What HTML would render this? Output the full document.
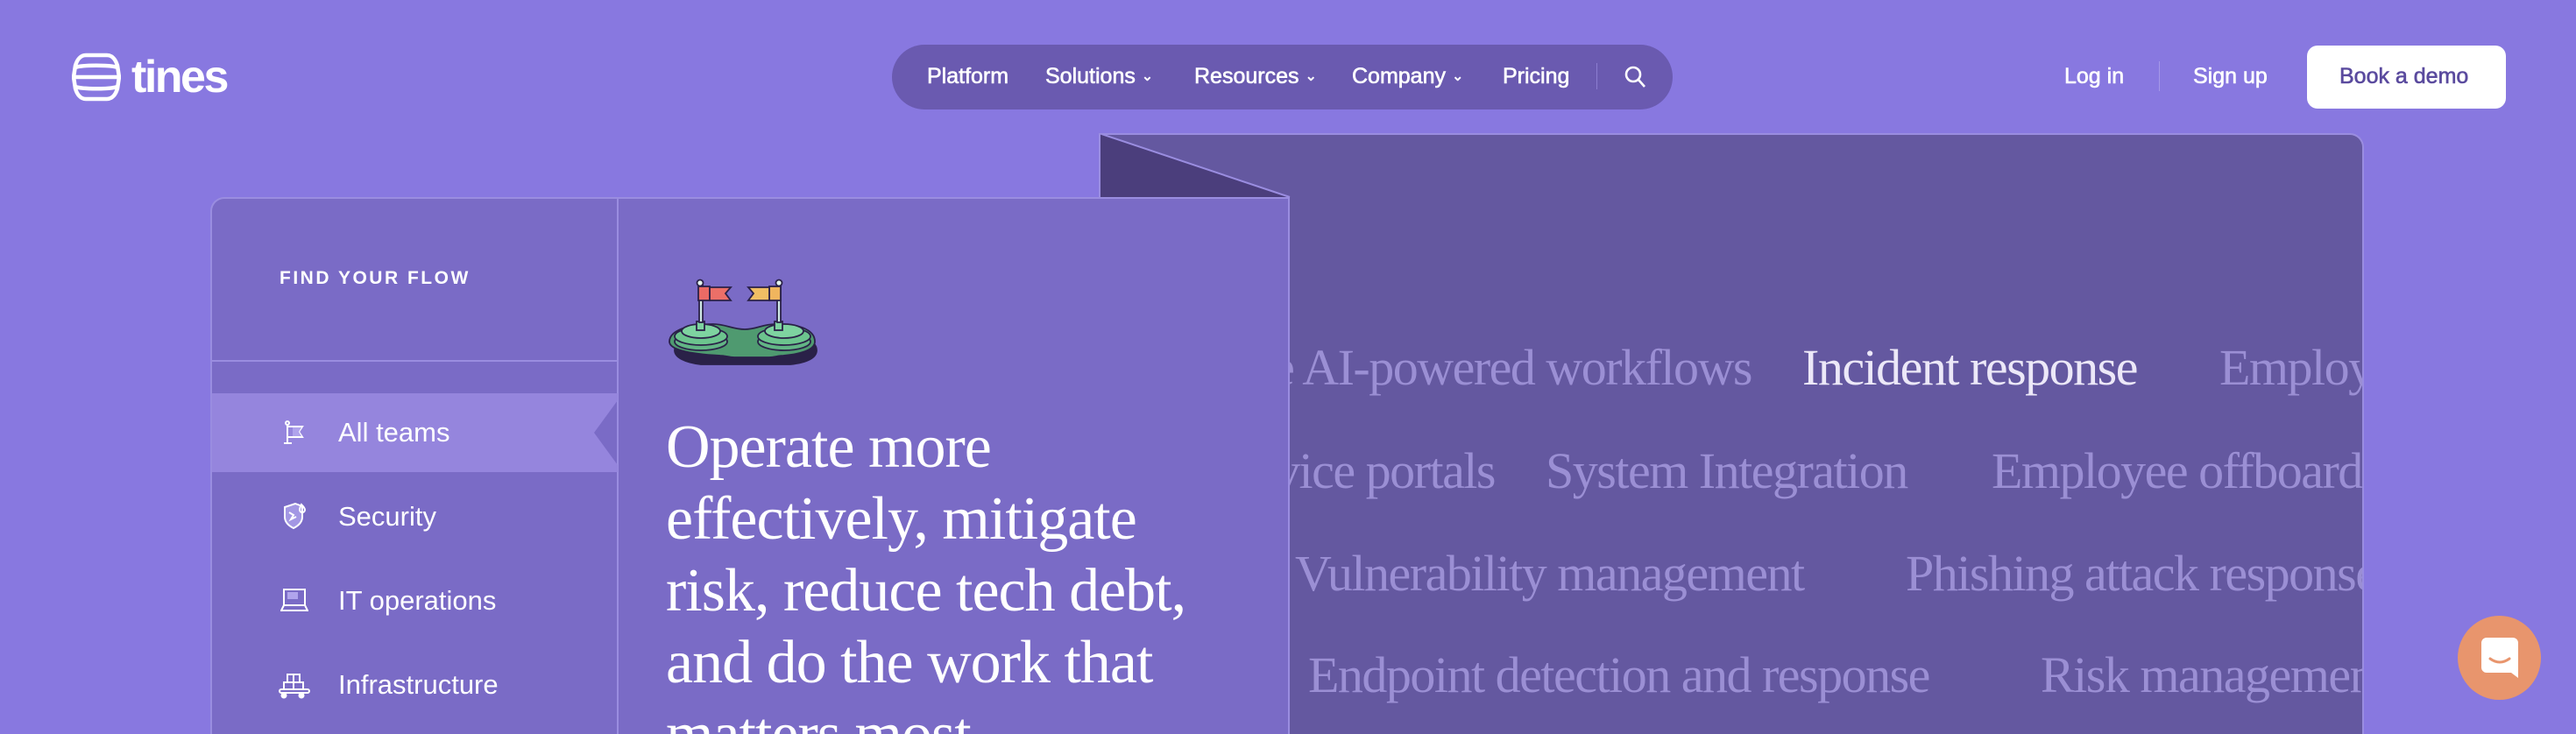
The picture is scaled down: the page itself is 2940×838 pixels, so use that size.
<!DOCTYPE html>
<html style="width:2940px;height:838px;overflow:hidden"><head><meta charset="utf-8"><style>
*{margin:0;padding:0;box-sizing:border-box}
body{width:2940px;height:838px;overflow:hidden;background:#8878e0;font-family:"Liberation Sans",sans-serif;position:relative;color:#fff}
.a{position:absolute;white-space:nowrap}
.nav{font-size:25px;font-weight:400;-webkit-text-stroke:0.6px #fff;color:#fff;top:72px;line-height:30px}
.serif{font-family:"Liberation Serif",serif}
.mq{font-size:58px;color:#9b8fd4;line-height:60px;letter-spacing:-1.5px;font-family:"Liberation Serif",serif}
.item{font-size:31px;color:#fff;left:386px;line-height:36px}
</style></head><body>
<svg class="a" style="left:82px;top:60px" width="56" height="56" viewBox="0 0 56 56" fill="none" stroke="#fff" stroke-width="4.5" stroke-linejoin="round">
<path d="M16 3h24c6 0 10 5 12 12l2 13-2 13c-2 7-6 12-12 12H16C10 53 6 48 4 41L2 28l2-13C6 8 10 3 16 3z"/>
<path d="M4 17c8-3 40-3 48 0M2 28h52M4 39c8 3 40 3 48 0"/>
</svg>
<div class="a" style="left:150px;top:58px;font-size:52px;font-weight:700;letter-spacing:-2.5px;line-height:60px">tines</div>

<div class="a" style="left:1018px;top:51px;width:891px;height:74px;border-radius:37px;background:#6a5ab0"></div>
<div class="a nav" style="left:1058px">Platform</div>
<div class="a nav" style="left:1193px">Solutions <span style="font-size:16px;vertical-align:3px">&#8964;</span></div>
<div class="a nav" style="left:1363px">Resources <span style="font-size:16px;vertical-align:3px">&#8964;</span></div>
<div class="a nav" style="left:1543px">Company <span style="font-size:16px;vertical-align:3px">&#8964;</span></div>
<div class="a nav" style="left:1715px">Pricing</div>
<div class="a" style="left:1822px;top:72px;width:1px;height:30px;background:#8c7dd0"></div>
<svg class="a" style="left:1852px;top:73px" width="30" height="30" viewBox="0 0 30 30" fill="none" stroke="#fff" stroke-width="2.6"><circle cx="12" cy="12" r="8"/><path d="M18 18l7 8"/></svg>

<div class="a nav" style="left:2356px">Log in</div>
<div class="a" style="left:2464px;top:70px;width:1px;height:34px;background:#a598e8"></div>
<div class="a nav" style="left:2503px">Sign up</div>
<div class="a" style="left:2633px;top:52px;width:227px;height:72px;border-radius:12px;background:#fff"></div>
<div class="a nav" style="left:2670px;color:#5a4a9e;-webkit-text-stroke:0.6px #5a4a9e">Book a demo</div>

<div class="a" style="left:1254px;top:152px;width:1444px;height:686px;background:#6458a0;border:2px solid #9a8de0;border-left:none;border-bottom:none;border-radius:0 16px 0 0;overflow:hidden">
  <div class="a mq" style="right:697px;top:236px">Automate AI-powered workflows</div>
  <div class="a mq" style="left:803px;top:236px;color:#ece8f8">Incident response</div>
  <div class="a mq" style="left:1279px;top:236px">Employee onboarding</div>
  <div class="a mq" style="right:990px;top:354px">Service portals</div>
  <div class="a mq" style="left:510px;top:354px">System Integration</div>
  <div class="a mq" style="left:1019px;top:354px">Employee offboarding</div>
  <div class="a mq" style="left:224px;top:471px">Vulnerability management</div>
  <div class="a mq" style="left:921px;top:471px">Phishing attack response</div>
  <div class="a mq" style="left:239px;top:587px">Endpoint detection and response</div>
  <div class="a mq" style="left:1075px;top:587px">Risk management</div>
</div>
<svg class="a" style="left:1254px;top:152px" width="220" height="75" viewBox="0 0 220 75"><polygon points="0,0 218,73 0,73" fill="#4b3e7c"/><line x1="0" y1="0" x2="218" y2="73" stroke="#9a8de0" stroke-width="2"/><line x1="1" y1="0" x2="1" y2="75" stroke="#9a8de0" stroke-width="2"/></svg>

<div class="a" style="left:240px;top:225px;width:1232px;height:613px;background:#7a6bc6;border:2px solid #9a8de0;border-bottom:none;border-radius:16px 0 0 0"></div>
<div class="a" style="left:704px;top:226px;width:2px;height:612px;background:#9a8de0"></div>
<div class="a" style="left:241px;top:411px;width:464px;height:2px;background:#9a8de0"></div>
<div class="a" style="left:319px;top:306px;font-size:21px;font-weight:700;letter-spacing:2.5px">FIND YOUR FLOW</div>
<svg class="a" style="left:242px;top:449px" width="463" height="90"><polygon points="0,0 463,0 463,8 436,45 463,82 463,90 0,90" fill="#9585dd"/></svg>

<svg class="a" style="left:322px;top:480px" width="26" height="28" viewBox="0 0 26 28" fill="none" stroke="#fff" stroke-width="2"><circle cx="6" cy="3" r="2"/><path d="M6 5v20M2 26h9M6 7h17l-4 6 4 6H6"/><path d="M12 8h10l-3 5 3 5h-10z" fill="#b0a4ec" stroke="none"/></svg>
<svg class="a" style="left:322px;top:573px" width="30" height="32" viewBox="0 0 30 32" fill="none" stroke="#fff" stroke-width="2"><path d="M3 6l12-4 8 3v12c0 6-4 10-10 13C7 27 3 23 3 17z" fill="#a397e4"/><path d="M8 12l5 3-3 5 6-3M22 3c2 2 4 4 4 6a3 3 0 0 1-6 0c0-2 1-4 2-6z"/></svg>
<svg class="a" style="left:320px;top:671px" width="32" height="28" viewBox="0 0 32 28" fill="none" stroke="#fff" stroke-width="2"><rect x="4" y="2" width="24" height="18"/><rect x="8" y="5" width="12" height="8" fill="#b0a4ec" stroke="none"/><path d="M4 20L1 26h30l-3-6"/></svg>
<svg class="a" style="left:318px;top:768px" width="36" height="30" viewBox="0 0 36 30" fill="none" stroke="#fff" stroke-width="2"><rect x="10" y="2" width="14" height="9"/><rect x="6" y="11" width="22" height="8"/><path d="M17 2v17"/><rect x="1" y="19" width="34" height="4" rx="2"/><circle cx="6" cy="26" r="2.5" fill="#fff"/><circle cx="26" cy="26" r="2.5" fill="#fff"/></svg>

<div class="a item" style="top:476px">All teams</div>
<div class="a item" style="top:572px">Security</div>
<div class="a item" style="top:668px">IT operations</div>
<div class="a item" style="top:764px">Infrastructure</div>

<svg class="a" style="left:740px;top:300px" width="220" height="140" viewBox="0 0 220 140" stroke="#2a2148" stroke-width="1.8">
<path d="M30 100c0-12 20-22 50-22 14 0 18 4 30 4s16-4 30-4c30 0 52 10 52 22 0 8-10 14-30 16H60c-18-2-30-8-30-16z" fill="#2a2148"/>
<path d="M24 90c0-12 20-20 50-20 14 0 22 6 36 6s20-6 36-6c30 0 44 8 44 20 0 8-12 14-36 16-6 0-10 2-16 2H98c-6 0-10-2-16-2-40-2-58-8-58-16z" fill="#4f9a70"/>
<ellipse cx="60" cy="90" rx="30" ry="10" fill="#62b585"/>
<ellipse cx="60" cy="84" rx="30" ry="10" fill="#6cc48e"/>
<ellipse cx="60" cy="78" rx="22" ry="8" fill="#7ed3a0"/>
<ellipse cx="155" cy="90" rx="30" ry="10" fill="#62b585"/>
<ellipse cx="155" cy="84" rx="30" ry="10" fill="#6cc48e"/>
<ellipse cx="155" cy="78" rx="22" ry="8" fill="#7ed3a0"/>
<rect x="55" y="67" width="9" height="10" fill="#7ed3a0"/>
<rect x="144" y="67" width="9" height="10" fill="#7ed3a0"/>
<rect x="58" y="25" width="4" height="43" fill="#cfe9e4"/>
<rect x="147" y="25" width="4" height="43" fill="#cfe9e4"/>
<circle cx="59" cy="23" r="3.5" fill="#e4f4ee"/>
<circle cx="149" cy="23" r="3.5" fill="#e4f4ee"/>
<rect x="57" y="27" width="13" height="16" fill="#ea6a65"/>
<path d="M70 28h24l-6 7 6 8H70z" fill="#ec6f68"/>
<rect x="138" y="27" width="13" height="16" fill="#f0b55e"/>
<path d="M138 28h-24l6 7-6 8h24z" fill="#f0be64"/>
</svg>

<div class="a serif" style="left:760px;top:470px;height:368px;overflow:hidden;font-size:70px;line-height:82px;letter-spacing:-1px;white-space:normal;width:740px">Operate more<br>effectively, mitigate<br>risk, reduce tech debt,<br>and do the work that<br>matters most.</div>

<div class="a" style="left:2805px;top:703px;width:95px;height:96px;border-radius:50%;background:#e8956d"></div>
<svg class="a" style="left:2832px;top:728px" width="42" height="46" viewBox="0 0 42 46"><path d="M6 0h30a6 6 0 0 1 6 6v40l-8-6H6a6 6 0 0 1-6-6V6a6 6 0 0 1 6-6z" fill="#fff"/><path d="M10 24q11 8 22 0" stroke="#e8956d" stroke-width="3" fill="none" stroke-linecap="round"/></svg>
</body></html>
